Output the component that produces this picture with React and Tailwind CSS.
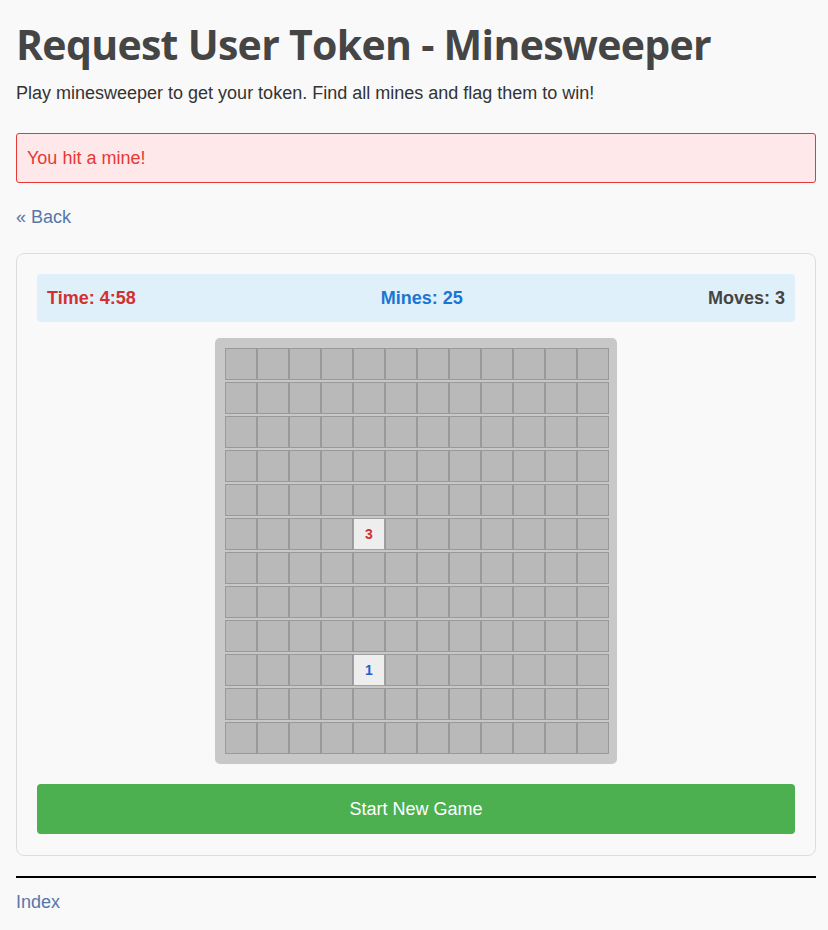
import React from "react";

const ROWS = 12;
const COLS = 12;

// revealed cells: [row, col] -> number
const REVEALED = {
  "5-4": { n: 3, color: "text-[#d32f2f]" },
  "9-4": { n: 1, color: "text-[#1e5fcf]" },
};

function Cell({ row, col }) {
  const hit = REVEALED[`${row}-${col}`];
  if (hit) {
    return (
      <div
        className={`w-8 h-8 border border-[#a0a0a0] bg-[#eeeeee] flex items-center justify-center text-[14px] font-bold ${hit.color}`}
      >
        {hit.n}
      </div>
    );
  }
  return <div className="w-8 h-8 border border-[#999999] bg-[#b9b9b9]" />;
}

export default function App() {
  return (
    <div
      className="min-h-screen bg-[#f9f9f9] pl-4 pr-3 pb-6 text-[#444444]"
      style={{ fontFamily: '"Liberation Sans", Arial, sans-serif' }}
    >
      <h1
        className="pt-[15px] text-[41px] leading-[58px] font-bold tracking-[-0.7px] text-[#454545]"
        style={{ fontFamily: '"Open Sans", "Noto Sans", sans-serif' }}
      >
        Request User Token - Minesweeper
      </h1>
      <p className="mt-[8px] text-[18px] leading-[24px] text-[#333333]">
        Play minesweeper to get your token. Find all mines and flag them to win!
      </p>

      {/* error alert */}
      <div className="mt-[28px] h-[50px] flex items-center px-[10px] border border-[#e53935] rounded-[3px] bg-[#ffe8ea] text-[18px] text-[#e53935]">
        You hit a mine!
      </div>

      <div className="mt-[23px]">
        <a href="#" className="text-[18px] leading-[22px] text-[#5577aa]">
          « Back
        </a>
      </div>

      {/* game card */}
      <div className="mt-[23px] border border-[#dddddd] rounded-[8px] px-5 pt-5 pb-[21px]">
        <div className="h-12 flex items-center justify-between px-[10px] rounded-[4px] bg-[#e0f0fb] text-[18px] font-bold">
          <span className="text-[#d32f2f]">Time: 4:58</span>
          <span className="text-[#1976d2]">Mines: 25</span>
          <span className="text-[#444444]">Moves: 3</span>
        </div>

        <div className="mt-4 flex justify-center">
          <div className="bg-[#c8c8c8] rounded-[5px] pt-[10px] pb-[10px] pl-[10px] pr-[8px] flex flex-col gap-[2px]">
            {Array.from({ length: ROWS }).map((_, r) => (
              <div key={r} className="flex">
                {Array.from({ length: COLS }).map((_, c) => (
                  <Cell key={c} row={r} col={c} />
                ))}
              </div>
            ))}
          </div>
        </div>

        <button className="mt-5 w-full h-[50px] rounded-[4px] bg-[#4caf50] text-white text-[18px]">
          Start New Game
        </button>
      </div>

      <hr className="mt-[20px] border-t-2 border-black" />
      <div className="mt-[11px]">
        <a href="#" className="text-[18px] text-[#5577aa]">
          Index
        </a>
      </div>
    </div>
  );
}
